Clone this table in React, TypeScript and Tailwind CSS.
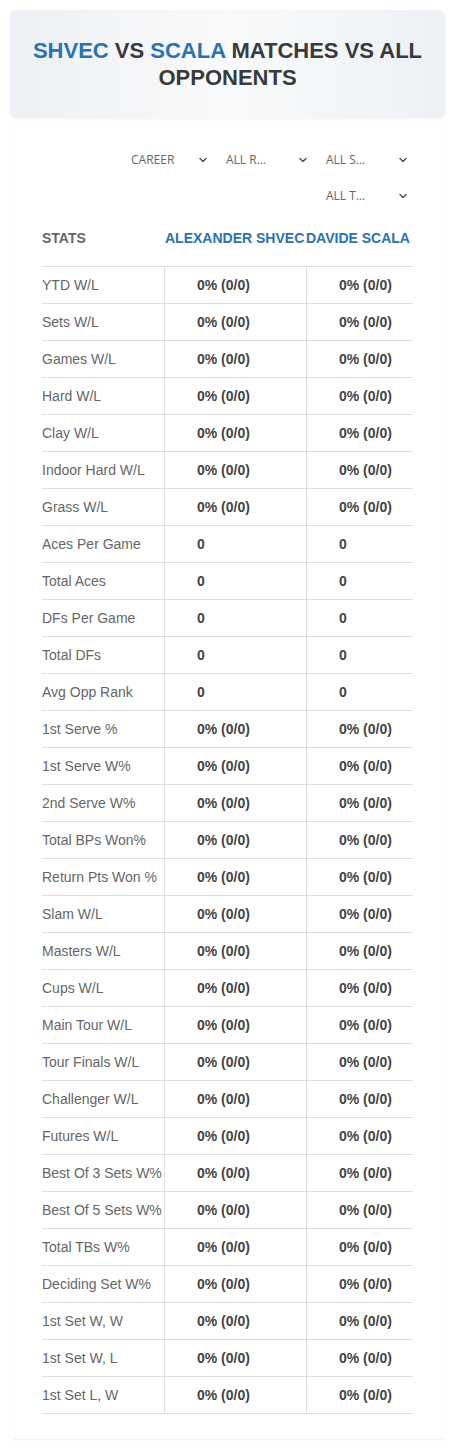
import { ChevronDown } from 'lucide-react';

const rows: [string, string][] = [
  ['YTD W/L', '0% (0/0)'],
  ['Sets W/L', '0% (0/0)'],
  ['Games W/L', '0% (0/0)'],
  ['Hard W/L', '0% (0/0)'],
  ['Clay W/L', '0% (0/0)'],
  ['Indoor Hard W/L', '0% (0/0)'],
  ['Grass W/L', '0% (0/0)'],
  ['Aces Per Game', '0'],
  ['Total Aces', '0'],
  ['DFs Per Game', '0'],
  ['Total DFs', '0'],
  ['Avg Opp Rank', '0'],
  ['1st Serve %', '0% (0/0)'],
  ['1st Serve W%', '0% (0/0)'],
  ['2nd Serve W%', '0% (0/0)'],
  ['Total BPs Won%', '0% (0/0)'],
  ['Return Pts Won %', '0% (0/0)'],
  ['Slam W/L', '0% (0/0)'],
  ['Masters W/L', '0% (0/0)'],
  ['Cups W/L', '0% (0/0)'],
  ['Main Tour W/L', '0% (0/0)'],
  ['Tour Finals W/L', '0% (0/0)'],
  ['Challenger W/L', '0% (0/0)'],
  ['Futures W/L', '0% (0/0)'],
  ['Best Of 3 Sets W%', '0% (0/0)'],
  ['Best Of 5 Sets W%', '0% (0/0)'],
  ['Total TBs W%', '0% (0/0)'],
  ['Deciding Set W%', '0% (0/0)'],
  ['1st Set W, W', '0% (0/0)'],
  ['1st Set W, L', '0% (0/0)'],
  ['1st Set L, W', '0% (0/0)'],
];

function Select({ label, narrow }: { label: string; narrow?: boolean }) {
  return (
    <div
      className={`flex h-[36px] items-center justify-between pl-[5px] pr-[2px] font-['Open_Sans',sans-serif] text-[12px] text-[#666] ${
        narrow ? 'w-[85px]' : 'w-[90px]'
      }`}
    >
      <span>{label}</span>
      <ChevronDown className="h-[12px] w-[12px] text-[#555]" strokeWidth={3} />
    </div>
  );
}

export default function App() {
  return (
    <div className="min-h-[1448px] bg-white px-[10px] pt-[10px] font-['Liberation_Sans',Arial,sans-serif]">
      <div className="flex h-[108px] flex-col items-center justify-center rounded-[6px] bg-gradient-to-r from-[#edf0f4] via-[#f9fafb] to-[#edf1f6] px-[12px] shadow-[0_1px_3px_rgba(0,0,0,0.05)]">
        <h1 className="text-center text-[22px] font-bold uppercase leading-[27px] text-[#3a3a3a]">
          <span className="text-[#2a72b0]">Shvec</span> vs{' '}
          <span className="text-[#2a72b0]">Scala</span> matches vs all opponents
        </h1>
      </div>

      <div className="mt-[10px] rounded-[6px] bg-white px-[32px] pb-[25px] pt-[14px] shadow-[0_1px_2px_rgba(0,0,0,0.06)]">
        <div className="flex flex-wrap justify-end gap-x-[10px] pr-[2px]">
          <Select label="CAREER" narrow />
          <Select label="ALL R…" />
          <Select label="ALL S…" />
          <Select label="ALL T…" />
        </div>

        <div className="mt-[16px] flex pb-[20px] text-[14px] font-bold uppercase leading-[16px]">
          <div className="w-[123px] text-[#666]">Stats</div>
          <div className="w-[141px] whitespace-nowrap text-[#2a72b0]">Alexander Shvec</div>
          <div className="flex-1 whitespace-nowrap text-[#2a72b0]">Davide Scala</div>
        </div>

        <div className="border-t border-[#dedede]">
          {rows.map(([label, value]) => (
            <div key={label} className="flex h-[37px] items-center border-b border-[#dedede] text-[14px]">
              <div className="w-[122px] text-[#666]">{label}</div>
              <div className="flex h-full w-[142px] items-center border-l border-[#dedede] pl-[32px] font-bold text-[#444]">
                {value}
              </div>
              <div className="flex h-full flex-1 items-center border-l border-[#dedede] pl-[32px] font-bold text-[#444]">
                {value}
              </div>
            </div>
          ))}
        </div>
      </div>
    </div>
  );
}
